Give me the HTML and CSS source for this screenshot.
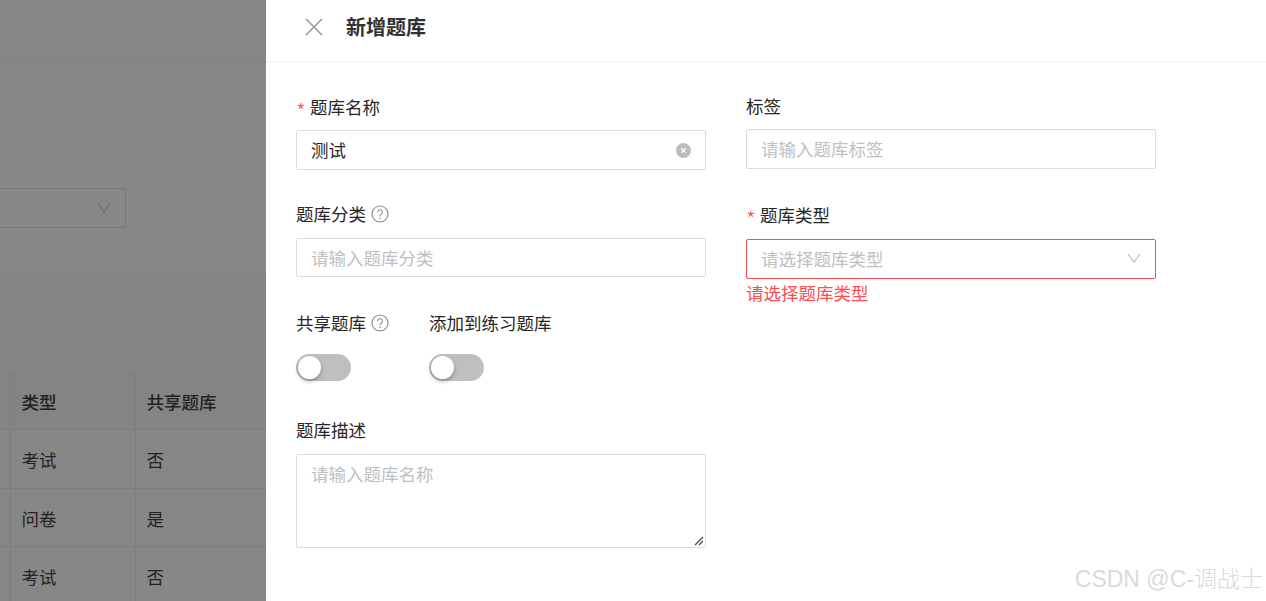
FILE: index.html
```html
<!DOCTYPE html>
<html lang="zh-CN">
<head>
<meta charset="utf-8">
<title>新增题库</title>
<link rel="stylesheet" href="styles.css">
</head>
<body>
<div class="page">
  <div class="page-top"></div>
  <div class="filter-area">
    <div class="page-select">
      <svg class="chev" viewBox="0 0 14 10" width="14" height="10"><path d="M1 1l6 8 6-8" fill="none" stroke="currentColor" stroke-width="1.1"/></svg>
    </div>
  </div>
  <div class="band"></div>
  <div class="table">
    <div class="tr th"><div class="td first"></div><div class="td c1">类型</div><div class="td c2">共享题库</div></div>
    <div class="tr r1"><div class="td first"></div><div class="td c1">考试</div><div class="td c2">否</div></div>
    <div class="tr r2"><div class="td first"></div><div class="td c1">问卷</div><div class="td c2">是</div></div>
    <div class="tr r3"><div class="td first"></div><div class="td c1">考试</div><div class="td c2">否</div></div>
  </div>
</div>

<aside class="drawer">
  <header class="drawer-head">
    <svg class="close" viewBox="0 0 18 18" width="18" height="18"><path d="M1 1l16 16M17 1L1 17" stroke="#999" stroke-width="1.6" fill="none"/></svg>
    <h1 class="title">新增题库</h1>
  </header>
  <div class="form">
    <div class="col col-left">
      <div class="field f-name">
        <div class="label"><span class="req">*</span>题库名称</div>
        <div class="input filled"><span class="value">测试</span>
          <svg class="clear" viewBox="0 0 16 16" width="15" height="15"><circle cx="8" cy="8" r="8" fill="#bdbdbd"/><path d="M5.6 5.6l4.8 4.8M10.4 5.6l-4.8 4.8" stroke="#fff" stroke-width="1.2"/></svg>
        </div>
      </div>
      <div class="field f-cat">
        <div class="label">题库分类<svg class="help" viewBox="0 0 18 18" width="18" height="18"><circle cx="9" cy="9" r="8" fill="none" stroke="#8c8c8c" stroke-width="1.1"/><path d="M6.6 7.2a2.4 2.4 0 1 1 3.7 2c-.9.6-1.3 1-1.3 2" fill="none" stroke="#8c8c8c" stroke-width="1.1"/><circle cx="9" cy="13.2" r=".8" fill="#8c8c8c"/></svg></div>
        <div class="input short"><span class="ph">请输入题库分类</span></div>
      </div>
      <div class="switches">
        <div class="sw-item sw-a">
          <div class="label">共享题库<svg class="help" viewBox="0 0 18 18" width="18" height="18"><circle cx="9" cy="9" r="8" fill="none" stroke="#8c8c8c" stroke-width="1.1"/><path d="M6.6 7.2a2.4 2.4 0 1 1 3.7 2c-.9.6-1.3 1-1.3 2" fill="none" stroke="#8c8c8c" stroke-width="1.1"/><circle cx="9" cy="13.2" r=".8" fill="#8c8c8c"/></svg></div>
          <div class="switch"><span class="knob"></span></div>
        </div>
        <div class="sw-item">
          <div class="label">添加到练习题库</div>
          <div class="switch"><span class="knob"></span></div>
        </div>
      </div>
      <div class="field f-desc">
        <div class="label">题库描述</div>
        <div class="textarea"><span class="ph">请输入题库名称</span>
          <svg class="grip" viewBox="0 0 10 10" width="10" height="10"><path d="M9 1L1 9M9 5L5 9" stroke="#444" stroke-width="1.2" fill="none"/></svg>
        </div>
      </div>
    </div>
    <div class="col col-right">
      <div class="field f-tag">
        <div class="label">标签</div>
        <div class="input"><span class="ph">请输入题库标签</span></div>
      </div>
      <div class="field f-type">
        <div class="label"><span class="req">*</span>题库类型</div>
        <div class="input error"><span class="ph">请选择题库类型</span>
          <svg class="chev-sm" viewBox="0 0 14 10" width="14" height="10"><path d="M1 1l6 8 6-8" fill="none" stroke="#bbb" stroke-width="1.1"/></svg>
        </div>
        <div class="err-msg">请选择题库类型</div>
      </div>
    </div>
  </div>
</aside>
<div class="watermark">CSDN @C-调战士</div>
</body>
</html>
```
FILE: styles.css
```css
* { box-sizing: border-box; }
html, body { margin: 0; height: 100%; overflow: hidden; }
body {
  position: relative;
  width: 1266px;
  height: 601px;
  background: #888888;
  font-family: "Noto Sans CJK SC", "Noto Sans", sans-serif;
  font-size: 17.5px;
  color: #262626;
}
.page { width: 266px; height: 601px; overflow: hidden; display: flex; flex-direction: column; }
.page-top { height: 63px; flex: none; background: #858786; border-bottom: 1px solid #7e807f; }
.filter-area { height: 209px; flex: none; padding-top: 125px; background: #888888; }
.page-select {
  width: 126px; height: 40px; border: 1px solid #787878; border-left: 0; border-radius: 0 3px 3px 0;
  display: flex; align-items: center; justify-content: flex-end; padding-right: 14px; color: #6a6a6a;
}
.band { height: 100px; flex: none; background: #858585; }
.table { flex: 1; background: #878787; }
.tr { display: flex; border-top: 1px solid #7e7e7e; line-height: 1; }
.th { height: 57px; color: #1c1c1c; font-weight: 500; background: #848484; }
.r1 { height: 59px; }
.r2 { height: 58px; }
.r3 { height: 60px; }
.td { display: flex; align-items: center; height: 100%; padding: 2px 0 0 10.5px; border-right: 1px solid #7e7e7e; color: #222; }
.first { width: 11px; padding: 0; }
.c1 { width: 125px; }
.c2 { flex: 1; border-right: 0; }
.r3 .td { padding-top: 0; }

.drawer { position: absolute; left: 266px; top: 0; width: 1000px; height: 601px; background: #fff; }
.drawer-head {
  height: 62px; border-bottom: 1px solid #f0f0f0; display: flex; align-items: center;
  padding: 0 0 7px 39px; gap: 23px;
}
.close { flex: none; }
.title { margin: 0; font-size: 20px; line-height: 28px; font-weight: 700; color: #303133; }
.form { display: flex; gap: 40px; padding-left: 30px; }
.col { width: 410px; flex: none; }
.label { display: flex; align-items: center; height: 24px; line-height: 24px; white-space: nowrap; }
.req { color: #ff4d4f; width: 14px; flex: none; font-size: 22px; font-weight: 300; padding-top: 6px; }
.help { margin-left: 5px; flex: none; }
.input {
  height: 40px; border: 1px solid #dcdcdc; border-radius: 2px; margin-top: 11px; padding: 0 14px 0 14px;
  display: flex; align-items: center; justify-content: space-between; line-height: 1; background: #fff;
}
.input.short { height: 39px; }
.ph { color: #c0c0c0; }
.value { color: #262626; }
.error { border-color: #ff4d4f; margin-top: 12px; }
.chev-sm { margin-bottom: 2px; }
.err-msg { color: #ff4d4f; line-height: 24px; height: 24px; margin-top: 2px; }
.f-name { padding-top: 33px; }
.f-cat { padding-top: 32px; }
.f-cat .input { margin-top: 12px; }
.f-tag { padding-top: 32px; }
.f-tag .input { margin-top: 11px; }
.f-type { padding-top: 34px; }
.switches { display: flex; gap: 41px; padding-top: 34px; }
.sw-item { flex: none; }
.sw-a { width: 92px; }
.switch { width: 55px; height: 27px; border-radius: 14px; background: #bfbfbf; margin-top: 19px; padding: 2px; }
.knob { display: block; width: 23px; height: 23px; border-radius: 50%; background: #fff; box-shadow: 0 2px 4px rgba(0,0,0,.3); }
.f-desc { padding-top: 37px; }
.textarea {
  position: relative; height: 94px; border: 1px solid #dcdcdc; border-radius: 2px; margin-top: 12px;
  padding: 7px 14px; line-height: 24px;
}
.grip { position: absolute; right: 1px; bottom: 1px; }
.watermark {
  position: absolute; right: 3px; top: 563px; font-family: "Liberation Sans", "Noto Sans CJK SC", sans-serif;
  font-size: 23px; font-weight: 300; line-height: 32px; color: #dadada; white-space: nowrap;
}
```
